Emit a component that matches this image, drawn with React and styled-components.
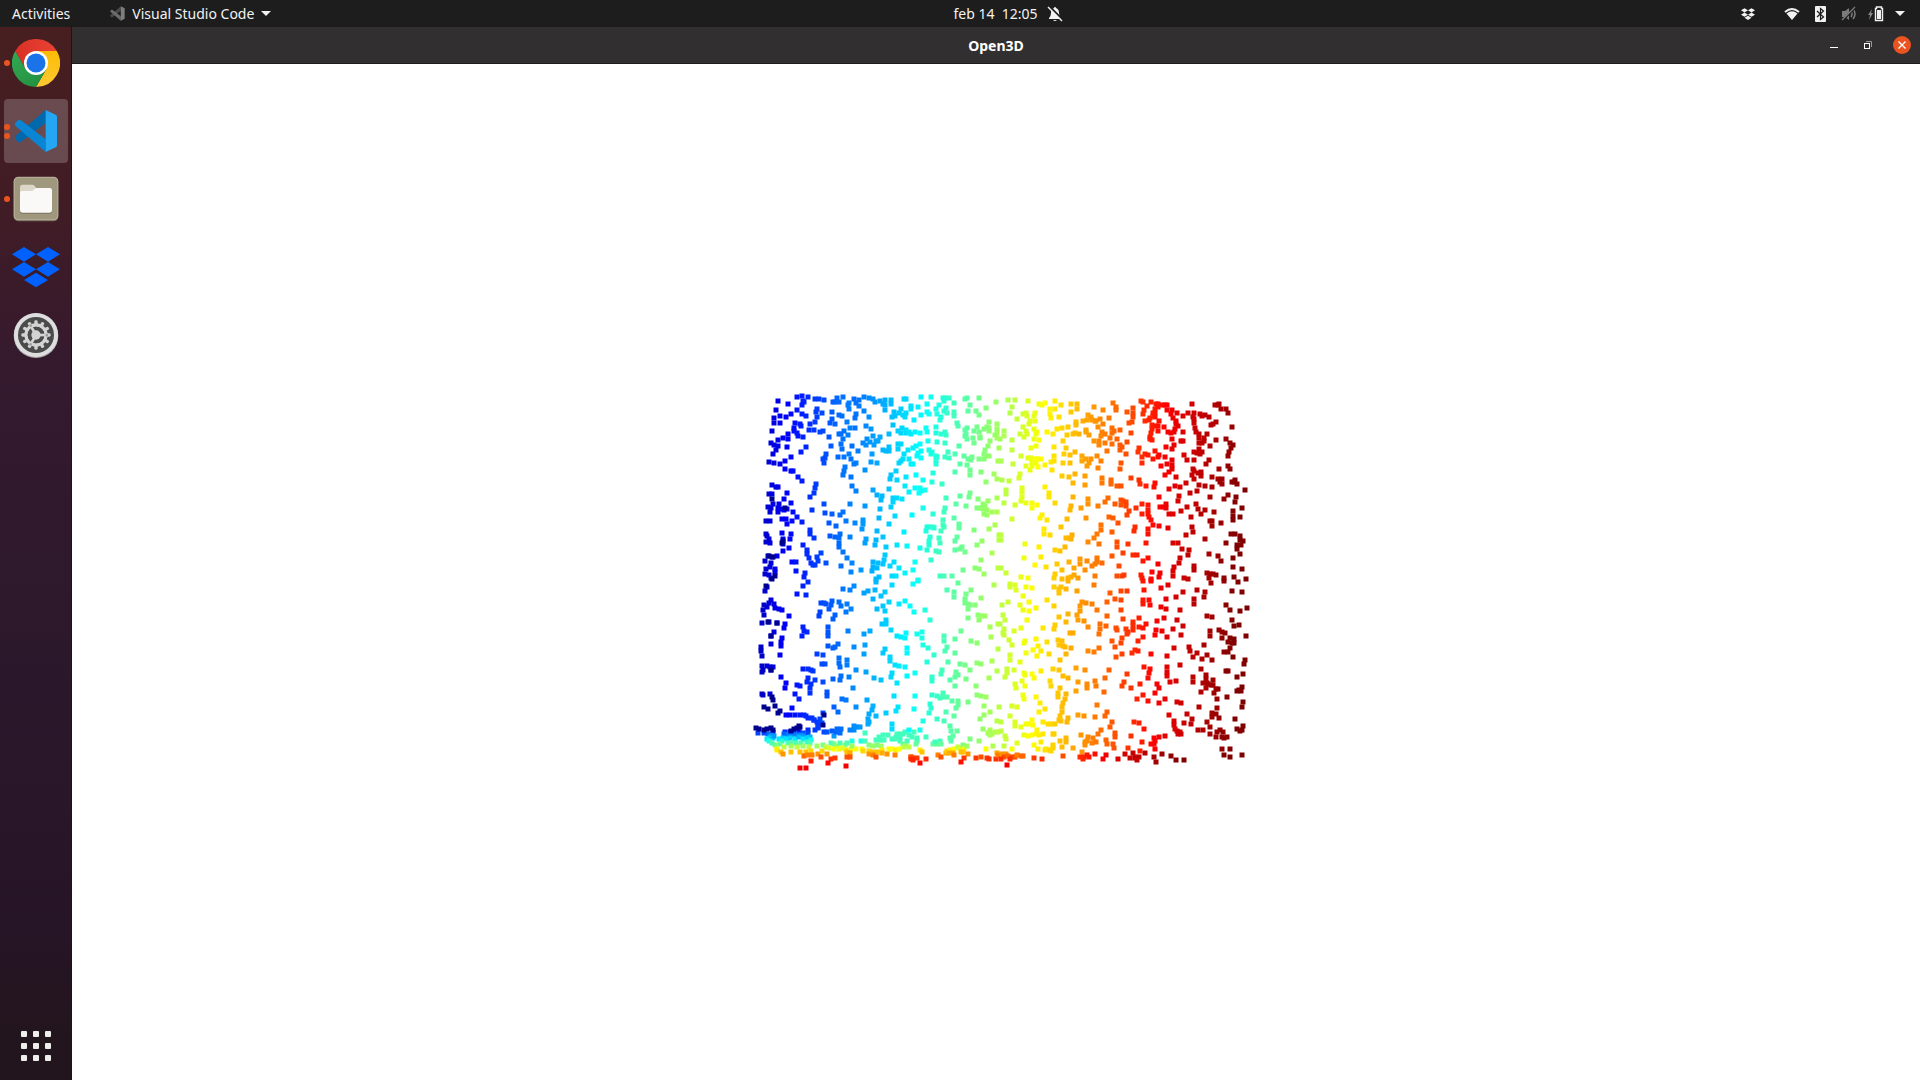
import React from "react";
import styled, { createGlobalStyle } from "styled-components";

const Global = createGlobalStyle`
  * { box-sizing: border-box; }
  html, body, #root { height: 100%; margin: 0; }
  body { font-family: "Noto Sans", "Open Sans", sans-serif; font-size: 14px; color: #f2f2f2; background: #fff; overflow: hidden; }
  button { font: inherit; color: inherit; background: none; border: 0; padding: 0; margin: 0; }
  svg { display: block; }
`;

const Desktop = styled.div`
  display: flex;
  flex-direction: column;
  height: 100vh;
`;

const TopBar = styled.header`
  display: grid;
  grid-template-columns: 72px 1fr auto 1fr;
  align-items: center;
  height: 27px;
  flex: none;
  background: #1d1d1d;
`;

const BarLeft = styled.div`
  grid-column: 1 / 3;
  display: flex;
  align-items: center;
  gap: 40px;
  padding-left: 12px;
`;

const BarButton = styled.button`
  display: flex;
  align-items: center;
  gap: ${(p) => p.$gap || 7}px;
  line-height: 26px;
  white-space: pre;
`;

const Clock = styled(BarButton)`
  padding-left: 24px;
`;

const Tray = styled.div`
  display: flex;
  align-items: center;
  justify-content: flex-end;
  gap: 11px;
  padding-right: 15px;
`;

const TrayItem = styled.span`
  padding-right: ${(p) => p.$space}px;
`;

const Body = styled.div`
  display: flex;
  flex: 1;
  min-height: 0;
`;

const Dock = styled.nav`
  display: flex;
  flex-direction: column;
  gap: 4px;
  width: 72px;
  flex: none;
  padding: 4px 3px 2px 4px;
  border-right: 1px solid #1f1119;
  background: linear-gradient(#481f20 0%, #401c26 18%, #351a2e 32%, #2d182c 55%, #261527 85%, #23151d 96%);
`;

const DockItem = styled.button`
  position: relative;
  display: flex;
  align-items: center;
  justify-content: center;
  width: 64px;
  height: 64px;
  border-radius: 4px;
  background: ${(p) => (p.$active ? "rgba(255,255,255,0.2)" : "none")};
  margin-top: ${(p) => (p.$last ? "auto" : "0")};
`;

const Running = styled.span`
  position: absolute;
  left: 0;
  top: 0;
  height: 100%;
  display: flex;
  flex-direction: column;
  justify-content: center;
  gap: 3px;
`;

const Dot = styled.i`
  width: 6px;
  height: 6px;
  border-radius: 50%;
  background: #e95420;
`;

const Win = styled.main`
  display: flex;
  flex-direction: column;
  flex: 1;
  min-width: 0;
  background: #fff;
`;

const TitleBar = styled.div`
  display: grid;
  grid-template-columns: 1fr auto 1fr;
  align-items: center;
  height: 37px;
  flex: none;
  background: #322f30;
  border-bottom: 1px solid #1f1c1d;
`;

const Title = styled.h1`
  grid-column: 2;
  margin: 0;
  padding-top: 2px;
  font-size: 14px;
  line-height: 34px;
  font-weight: 700;
  color: #fff;
`;

const Controls = styled.div`
  display: flex;
  justify-content: flex-end;
  gap: 10px;
  padding-right: 6px;
`;

const Control = styled.button`
  width: 24px;
  height: 24px;
`;

const Scene = styled.svg`
  flex: 1;
  width: 100%;
  min-height: 0;
`;

/* ---------- icons ---------- */

const Chrome = () => (
  <svg width="48" height="48" viewBox="0 0 48 48">
    <defs>
      <linearGradient id="cr" x1="0" x2="1"><stop offset="0" stopColor="#d93025" /><stop offset="1" stopColor="#ea4335" /></linearGradient>
      <linearGradient id="cg" x1="0" x2="1" y1="0" y2="1"><stop offset="0" stopColor="#34a853" /><stop offset="1" stopColor="#1e8e3e" /></linearGradient>
      <linearGradient id="cy" x1="0" x2="0" y1="0" y2="1"><stop offset="0" stopColor="#fbbc04" /><stop offset="1" stopColor="#fcc934" /></linearGradient>
    </defs>
    <path fill="url(#cr)" d="M3.2 12A24 24 0 0 1 44.8 12H24L13.6 30Z" />
    <path fill="url(#cy)" d="M44.8 12A24 24 0 0 1 24 48L34.4 30L24 12Z" />
    <path fill="url(#cg)" d="M24 48A24 24 0 0 1 3.2 12L13.6 30L24 36L34.4 30Z" />
    <circle cx="24" cy="24" r="12" fill="#fff" />
    <circle cx="24" cy="24" r="9.5" fill="#1a73e8" />
  </svg>
);

const VSCode = ({ size = 48, mono }) => (
  <svg width={size} height={size} viewBox={mono ? "6 6 132 132" : "0 0 144 144"}>
    <path fill={mono ? "#4a4a4a" : "#0069ae"} d="M101 9V47L27 104Q22 108 18 104L10 96Q6 92 10 88Z" />
    <path fill={mono ? "#6c6c6c" : "#0a85d3"} d="M101 135V97L27 40Q22 36 18 40L10 48Q6 52 10 56Z" />
    <path fill={mono ? "#7e7e7e" : "#24a6f2"} d="M101 9L131 23Q135 25 135 29V115Q135 119 131 121L101 135Z" />
  </svg>
);

const Files = () => (
  <svg width="48" height="48" viewBox="0 0 144 144">
    <rect x="5" y="8" width="134" height="131" rx="14" fill="#6f6958" />
    <rect x="5" y="5" width="134" height="131" rx="14" fill="#b8b19b" />
    <rect x="8" y="8" width="128" height="125" rx="12" fill="#a0977f" />
    <path fill="#dcd6c8" d="M24 36Q24 29 31 29H61Q65 29 68 33L74 41H112V60H24Z" />
    <path fill="#837b67" d="M24 52H120V109Q120 117 112 117H32Q24 117 24 109Z" />
    <path fill="#faf9f7" d="M24 53Q24 48 30 48H58Q64 48 67 43Q70 39 75 39H113Q120 39 120 46V106Q120 113 113 113H31Q24 113 24 106Z" />
  </svg>
);

const Dropbox = ({ size = 48, color = "#0061ff" }) => (
  <svg width={size} height={size} viewBox="0 0 144 144">
    {[[36, 34], [108, 34], [36, 79], [108, 79], [72, 111]].map(([x, y]) => (
      <path key={x + "-" + y} fill={color} d={`M${x - 36} ${y}L${x} ${y - 22}L${x + 36} ${y}L${x} ${y + 22}Z`} />
    ))}
  </svg>
);

const Settings = () => (
  <svg width="48" height="48" viewBox="0 0 144 144">
    <circle cx="72" cy="74" r="67" fill="#a8a8a8" />
    <circle cx="72" cy="72" r="66" fill="#dedede" />
    <circle cx="72" cy="72" r="54" fill="#4b4b4b" />
    {Array.from({ length: 12 }, (_, i) => (
      <rect key={i} x="67" y="28" width="10" height="16" rx="4" fill="#d3d3d3" transform={`rotate(${i * 30} 72 72)`} />
    ))}
    <circle cx="72" cy="72" r="30" fill="none" stroke="#d3d3d3" strokeWidth="10" />
    <circle cx="72" cy="72" r="20" fill="none" stroke="#4b4b4b" strokeWidth="10" />
    {[0, 120, 240].map((a) => (
      <g key={a} transform={`rotate(${a} 72 72)`}>
        <rect x="72" y="68" width="28" height="8" fill="#d3d3d3" />
        <circle cx="56" cy="44" r="4" fill="#9a9a9a" />
      </g>
    ))}
    <circle cx="72" cy="72" r="14" fill="#d3d3d3" />
  </svg>
);

const AppsGrid = () => (
  <svg width="30" height="30" viewBox="0 0 30 30">
    {[0, 12, 24].map((y) => [0, 12, 24].map((x) => (
      <rect key={x + "-" + y} x={x} y={y} width="6" height="6" rx="1" fill="#eeeeec" />
    )))}
  </svg>
);

const Caret = () => (
  <svg width="10" height="6" viewBox="0 0 10 6"><path d="M0 0H10L5 5Z" fill="#f2f2f2" /></svg>
);

const BellOff = () => (
  <svg width="16" height="16" viewBox="0 0 16 16">
    <path fill="#f2f2f2" d="M8 1Q9 1 9 2Q12 3 12 7Q12 10 14 12V13H2V12Q4 10 4 7Q4 3 7 2Q7 1 8 1ZM6 14H10Q9 15 8 15Q7 15 6 14Z" />
    <path d="M2 0L16 14" stroke="#1d1d1d" strokeWidth="2" />
    <path d="M1 1L15 15" stroke="#f2f2f2" strokeWidth="1.4" />
  </svg>
);

const Wifi = () => (
  <svg width="16" height="14" viewBox="0 0 16 14">
    <path d="M1 5Q8 -1 15 5" fill="none" stroke="#f2f2f2" strokeWidth="2" />
    <path d="M2.5 6.5Q8 2 13.500 6.500L8 13Z" fill="#f2f2f2" />
  </svg>
);

const Bluetooth = () => (
  <svg width="11" height="16" viewBox="0 0 11 16">
    <rect width="11" height="16" rx="1" fill="#f2f2f2" />
    <path d="M2 5L8.500 11L5.500 13.500V2.500L8.500 5L2 11" fill="none" stroke="#1d1d1d" strokeWidth="1.200" />
  </svg>
);

const Muted = () => (
  <svg width="16" height="16" viewBox="0 0 16 16">
    <path d="M1 5H4L8 2V14L4 11H1Z" fill="#7c7c7c" />
    <path d="M10 5Q12 8 10 11M12 3Q16 8 12 13" fill="none" stroke="#7c7c7c" strokeWidth="1.500" />
    <path d="M15 1L2 14" stroke="#1d1d1d" strokeWidth="2" />
    <path d="M14 1L1 14" stroke="#7c7c7c" strokeWidth="1.300" />
  </svg>
);

const Battery = () => (
  <svg width="16" height="16" viewBox="0 0 16 16">
    <path d="M4 3L0 9H2L1 14L5 7H3Z" fill="#888" />
    <path d="M8.500 2.500V1H13.500V2.500H14.500V14.500H7.500V2.500Z" fill="none" stroke="#f2f2f2" strokeWidth="1.400" />
    <rect x="9" y="4" width="4" height="9" fill="#f2f2f2" />
  </svg>
);

/* ---------- point cloud ---------- */

/* Scan tiles: origin in screen space, samples as x,y pairs in thirds of a pixel. */
const TILES = [
  { x: 740, y: 380, pts: `113,64 145,71 172,52 185,47 205,50 188,62 193,66 186,76 225,57 238,57 252,61 278,65 291,53 310,52 284,65 298,67 326,68 325,74 343,58 371,52 357,60 347,70 357,78 387,54 398,56 406,67 421,64 436,61 430,72 436,75 452,72 453,60 436,90 491,56 499,58 543,50 573,50 560,72 535,82 596,74 611,64 616,54 628,53 610,53 642,68 676,58 682,53 718,54 768,65 691,76 739,84
107,89 102,115 103,128 120,130 121,107 138,111 152,101 172,90 185,103 199,108 232,86 229,96 246,98 232,112 225,125 209,133 165,130 180,131 184,137 162,145 162,152 175,167 171,160 207,149 221,151 239,155 250,154 190,172 276,97 277,117 271,130 286,133 296,106 305,108 326,86 322,125 347,102 345,115 372,92 388,112 330,145 345,143 311,154 323,166 377,138 393,146 460,134 463,97 457,110 483,87 478,100 490,104 497,100 496,112 466,109 512,78 513,86 522,121 544,106 561,97 568,101 589,88 591,102 619,84 613,92 641,96 641,109 620,98 604,112 600,121 651,128 653,138 685,92 707,92 718,106 748,127 771,131 711,140 741,140 747,144 746,154 732,147 716,155 771,146
96,154 92,188 113,180 130,175 144,176 145,162 103,195 115,198 109,210 99,221 140,202 199,201 184,215 88,247 101,249 119,252 135,242 152,231 134,268 152,274 160,274 174,290 187,303 266,172 274,199 257,221 254,235 252,248 249,237 297,162 304,161 308,176 302,193 307,206 294,231 312,231 326,221 333,236 343,251 349,250 355,214 337,197 370,188 382,178 379,194 390,187 400,169 407,182 414,184 402,196 419,171 397,222 392,245 410,249 376,270 315,260 311,273 310,286 334,290 447,163 475,154 487,145 483,160 499,150 498,160 508,157 513,162 524,157 541,160 559,144 560,157 589,142 614,157 589,160 604,162 619,164 615,190 592,185 563,183 540,192 474,192 484,193 473,208 447,202 446,214 430,211 439,212 505,210 520,203 527,197 493,223 542,212 533,219 530,228 542,233 508,238 489,237 483,242 477,249 512,251 520,251 568,210 576,216 573,223 588,227 587,240 587,252 592,232 616,230 625,217 628,234 646,221 657,199 676,151 681,144 679,161 674,167 680,176 702,154 698,175 703,189 719,174 719,170 751,184 743,197 736,209 771,159 771,173 766,165 777,204 673,228 683,237 696,230 694,241 718,238 733,222 732,237 738,228 748,228 775,243 660,251 680,254 689,269 691,284 646,276 724,275 763,283 771,297 737,306
95,316 107,320 115,320 86,341 96,341 140,338 229,313 225,325 223,338 209,350 337,319 349,334 398,329 446,328 454,286 469,274 451,297 471,300 499,291 529,284 495,318 508,335 526,324 541,325 556,329 543,333 538,340 549,300 579,278 577,305 607,311 411,345 426,348 424,361 460,354 470,354 485,358 458,367 454,380 421,388 376,379 329,371 252,371 84,381 94,383 99,372 117,371 114,385 127,387 115,397 90,396 132,358 153,368 141,386 131,391 217,391 160,396 170,411 157,423 127,418 138,418 140,433 79,422 89,422 185,427 255,399 276,403 299,406 310,395 268,428 289,438 318,424 344,428 370,420 368,433 366,446 418,414 447,433 466,409 515,404 550,383 579,402 618,355 615,383 612,396 648,373 660,348 689,339 686,352 713,356 679,379 710,384 722,384 728,373 734,377 745,362 771,354 728,387 740,390 740,404 755,397 771,395 733,401 608,421 608,435 643,414 657,431 658,444 611,442 560,440 568,442 582,444 557,454 578,442 569,470 603,454 701,451 748,447 766,435
79,462 82,468 86,476 78,487 91,489 125,458 152,462 149,476 147,503 130,514 129,478 129,491 210,449 210,461 222,474 190,496 202,511 201,523 208,535 212,550 220,554 226,556 234,544 231,530 243,518 259,550 269,469 284,472 301,462 297,475 298,488 298,501 310,517 322,534 303,557 337,550 331,472 376,488 379,476 410,454 407,481 406,495 430,471 438,501 470,494 491,456 502,499 539,505 566,483 568,496 561,510 598,475 600,489 588,514 596,515 651,471 644,484 660,506 665,500 646,511 676,517 711,496 726,484 776,466 776,480 757,518 722,539 573,539 526,545 462,547 434,526 432,540 430,553 451,558 477,563 495,580 520,571 415,550 400,547 399,562 396,574 412,563 364,569 333,576 85,528 97,532 110,529 75,542 94,548 91,560 79,567 106,576 74,582 88,585 93,593 104,566 155,545 169,547 167,574 194,578 193,591 416,592 407,598 457,587 467,588 535,600 601,587 613,588 635,587 670,571 704,563 718,567 733,583 775,565` },
  { x: 1000, y: 380, pts: `24,61 46,60 84,64 37,82 30,100 52,118 13,154 13,167 1,177 36,180 37,209 2,243 40,253 70,102 78,100 82,109 102,107 105,98 117,73 125,74 134,69 164,64 182,74 150,87 150,102 152,115 165,88 178,110 213,73 231,71 232,88 214,97 281,81 310,90 339,68 347,82 348,91 68,142 89,124 105,124 88,132 78,154 61,163 80,163 71,172 111,155 101,147 107,162 102,178 117,181 109,197 93,204 64,227 84,233 92,233 107,236 124,237 111,237 115,262 95,245 95,258 90,270 78,257 109,250 154,245 134,255 142,155 159,162 172,146 185,143 205,142 200,166 218,162 226,160 238,162 229,125 229,134 248,122 262,121 263,106 272,112 284,122 289,124 301,117 310,131 328,115 295,141 257,150 257,156 266,164 305,157 315,161 302,169 298,182 283,184 296,195 315,189 335,192 337,145 337,158 343,154 350,176 331,175 359,149 361,196 360,209 366,202 322,214 188,182 197,205 163,202 193,223 211,226 226,216 163,229 163,242 189,250 211,248 246,229 247,243 257,236 272,238 267,250 262,259 292,227 304,242 295,265 157,270 186,289 206,292 224,282 220,309 256,287 254,314 307,295 307,309 334,299 334,313 352,317 363,319 360,266 364,248 378,223 382,185 392,160 392,295 61,282 56,293 28,304 5,300 19,331 18,343 11,370 44,376 67,324 67,337 67,350 64,363 77,368 95,370 95,384 110,374 135,322 148,338 147,351 164,369 219,350 213,377 211,390 242,383 263,357 263,371 293,377 316,367 324,354 345,372 363,360 363,374 370,362 377,365 378,378 388,394 382,406 409,384 37,417 127,404 121,415 142,421 133,447 133,461 150,465 184,442 201,418 257,414 326,411 340,414 353,430 304,436 302,449 291,461 282,474 264,485 297,492 335,455 216,464 214,476 207,473 199,474 195,502 164,509 179,513 118,501 124,532 75,493 73,535 104,554 139,561 172,553 187,570 165,582 163,595 207,546 223,563 239,538 240,551 262,542 292,533 291,546 284,552 277,559 254,569 306,550 285,588 335,527 351,487 350,500 369,519 383,492 357,559 352,587 366,589 373,584 222,584 214,591 234,593 185,598 203,595 64,590 84,593 18,580 4,564 2,466 2,479 277,121
382,96 400,85 400,98 398,112 395,126 386,130 422,63 430,65 440,77 453,66 433,90 429,103 467,71 474,72 486,74 494,76 502,76 464,86 473,81 460,98 458,109 465,100 466,112 449,115 436,124 448,121 478,122 457,134 467,139 473,137 456,146 453,160 449,172 449,178 457,180 473,154 492,142 516,89 514,102 518,115 502,90 530,98 529,122 528,133 535,139 525,148 522,155 505,157 512,159 517,176 549,108 564,100 575,72 582,98 580,111 581,118 582,130 585,144 588,157 597,163 599,102 607,107 614,105 628,111 649,125 640,131 632,136 646,76 658,73 653,76 662,88 679,88 685,100 697,140 620,162 550,155 550,182 543,182 597,173 611,175 613,184 596,188 605,190 648,180 629,198 679,176 691,189 700,194 694,204 686,217 685,229 607,217 590,218 597,208 582,217 599,222 551,226 560,239 581,241 627,239 619,253 523,195 516,208 497,201 466,214 417,205 413,215 426,232 435,223 445,224 426,248 473,231 460,237 478,226 494,232 484,259 516,241 515,254 502,252 516,268 508,277 495,285 529,290 578,266 583,274 593,280 603,275 577,285 581,298 603,287 635,292 657,268 683,258 691,268 653,296 666,298 660,305 667,311 696,305 703,307 711,311 706,299 736,330 637,321 615,319 597,314 592,332 571,340 557,309 541,320 526,317 508,328 536,349 534,362 477,352 417,300 421,313 437,318 466,308 461,321 631,350 685,346 673,357 708,352 704,366 726,384 721,411 700,394 700,407 700,421 588,371 595,387 604,403 615,390 642,395 573,412 562,380 544,393 518,402 508,401 499,371 499,384 481,381 491,382 427,373 445,376 445,389 445,402 426,401 448,412 453,421 460,434 477,438 504,443 443,447 443,461 405,440 401,453 439,488 629,423 637,424 636,437 664,428 577,442 578,455 559,466 615,477 694,462 706,463 720,467 719,480 730,482 710,494 722,495 710,507 721,523 679,488 519,489 534,490 546,507 566,511 563,524 541,535 538,548 628,521 655,527 664,542 699,534 583,557 582,571 522,560 520,574 520,588 475,551 445,535 428,543 398,524 412,526 424,585 457,577 479,580 477,592 427,595 452,597 620,578 630,582 640,582 649,584 628,595 671,594 700,562 726,566 702,592 738,597 552,594 564,597` },
  { x: 740, y: 580, pts: `82,20 75,33 205,7 190,18 172,43 199,46 94,60 86,68 71,75 69,89 80,82 102,73 104,85 117,88 127,90 73,106 146,107 66,130 88,127 112,128 134,133 132,145 102,155 94,167 126,173 122,186 123,198 92,193 120,226 64,200 64,213 66,228 67,257 82,258 91,261 98,262 68,270 66,277 93,271 188,142 201,157 187,169 191,153 242,68 251,70 259,72 275,62 272,74 266,87 239,95 237,108 285,104 280,117 296,65 303,79 320,71 333,86 317,97 310,26 329,31 343,19 372,39 385,33 407,5 404,31 400,58 424,49 436,37 455,14 519,11 535,2 447,67 430,77 436,92 412,88 478,73 495,63 509,79 523,95 556,89 437,120 425,131 437,132 452,151 569,119 547,156 532,162 547,174 264,142 264,156 264,169 325,153 390,152 372,163 264,199 278,203 286,202 294,191 342,201 374,194 372,222 436,207 430,220 450,231 450,244 471,169 484,172 494,173 499,160 501,205 501,218 549,196 565,205 581,224 561,247 613,169 613,182 622,202 614,212 645,177 664,152 646,220 623,245 659,252 675,256 710,248 724,251 757,244 775,207 711,190 694,182 754,171 775,131 750,140 726,109 715,106 716,119 734,109 683,114 653,10 621,31 642,37 642,50 694,31 677,43 674,56 675,69 685,73 691,74 685,86 705,75 723,54 761,16 770,274 746,295 709,317 689,271 679,296 649,277 653,285 646,290 630,300 646,318 607,269 603,282 577,290 576,303 230,221 250,226 247,251 256,253 190,266 205,268 212,270 220,272 297,235 297,249 322,241 320,254 300,262 347,271 377,277 326,292 304,289 299,301 278,298 249,305 401,295 424,299 457,280 452,292 471,310 502,289 525,280 464,256 478,259 494,261 203,295 201,307 226,299 212,312 211,325 211,338 123,292 137,310 134,323 172,316 181,318 166,343 176,358 65,343 69,346 90,341 157,384 262,336 260,348 339,323 463,349 526,349 305,358 318,361 283,382 294,397 348,381 381,360 398,378 395,391 387,401 407,407 385,418 384,431 439,400 474,380 469,393 522,388 549,424 571,372 573,385 568,398 576,346 591,348 599,355 609,338 608,350 621,352 637,364 655,362 655,374 648,384 617,395 642,408 612,424 631,437 590,418 712,346 724,347 739,350 685,367 732,377 777,381 749,395 731,405 720,417 771,423 729,448 749,450 652,454 633,453
139,405 151,405 166,406 179,406 191,404 197,408 205,415 215,413 221,421 230,425 249,400 240,417 233,429 247,428 233,440 226,450 222,420 98,456 53,459 71,460 136,456 149,457 161,459 176,453 188,460 203,451 131,463 144,465 156,466 170,465 182,466 192,468 205,460 210,470 233,445 251,455 261,457 276,454 281,467 289,457 292,448 302,447 301,460 331,451 341,439 343,450 352,440 361,441 386,426 374,460 456,433 456,446 85,463 94,465 90,472 99,474 101,467 80,477 88,482 118,478 128,475 127,484 140,476 151,474 165,478 178,472 190,478 200,473 212,480 200,487 183,488 168,490 153,488 144,490 120,492 104,494 96,490 211,489 110,508 133,500 154,498 172,500 190,498 206,500 230,499 250,494 257,500 272,490 283,492 290,497 301,488 315,495 322,490 337,484 363,484 375,482 408,481 416,472 421,479 430,466 445,466 433,479 455,476 467,470 472,461 482,461 479,470 490,463 494,457 508,451 508,464 523,455 540,451 516,471 531,474 557,470 530,483 480,484 490,491 500,482 498,494 508,502 465,478 268,504 283,508 296,508 307,505 319,510 334,507 347,507 336,497 365,507 368,514 388,495 399,497 411,495 424,499 425,509 447,507 456,508 468,509 478,507 493,500 529,493 540,510 547,515 578,491 591,491 601,482 602,493 586,485 629,475 640,469 634,482 112,509 124,515 130,523 154,515 180,515 197,516 212,513 215,525 192,527 203,525 233,523 243,532 246,512 261,523 273,537 284,535 321,517 330,520 320,530 329,531 388,514 387,523 400,517 411,516 400,525 407,532 426,520 441,521 466,524 514,532 520,534 532,533 558,537 512,530 512,538 519,541 539,549 595,524 603,532 618,520 620,512 631,509 642,508 628,518 640,519 653,500 660,505 668,495 673,508 668,517 681,497 683,522 643,525 662,515 691,478 716,484 738,508 760,497 770,519 745,458 755,461 765,457 750,466 775,457 673,535 662,547 708,535 722,532 742,533 748,536 768,538 775,525 212,544 264,549 317,558 181,563 199,565` },
  { x: 1000, y: 580, pts: `29,11 31,20 46,16 48,30 69,47 78,20 96,24 24,67 5,76 61,74 70,89 88,65 88,92 109,83 82,119 9,104 15,120 1,131 13,148 9,160 12,166 41,154 63,145 26,180 35,196 76,184 73,188 109,176 115,198 100,210 124,214 112,228 79,220 29,224 31,239 61,245 21,266 21,279 16,292 41,270 73,278 74,284 46,311 49,325 65,302 76,318 70,344 71,358 96,281 101,295 122,272 107,352 35,379 52,382 121,370 136,386 118,397 31,407 142,61 162,78 163,22 176,38 178,28 182,20 197,28 205,4 230,34 281,16 176,110 197,127 205,101 230,106 235,121 251,124 240,79 246,66 240,92 259,69 277,72 291,90 265,141 164,136 161,148 129,143 142,187 146,221 175,180 185,182 178,195 190,198 196,202 212,203 197,222 179,241 159,266 178,269 190,287 203,295 229,265 256,270 235,307 261,313 261,325 228,333 284,303 288,317 311,337 316,295 328,270 290,375 211,158 220,160 299,133 299,147 297,161 317,137 320,108 322,67 330,40 346,57 362,32 364,61 382,34 364,89 369,118 349,144 350,151 378,148 383,156 382,163 400,125 400,138 400,151 418,113 417,142 430,144 438,131 365,175 364,188 335,183 345,200 349,231 365,223 263,213 281,216 296,203 149,304 154,319 180,324 174,338 174,351 199,343 194,356 190,369 187,382 185,395 180,408 177,421 182,424 164,433 154,431 203,414 201,427 130,427 145,431 234,406 251,409 285,412 320,395 315,408 371,306 365,319 380,281 393,324 335,427 331,442 344,458 344,471 303,449 294,461 46,425 46,438 64,442 79,433 86,431 97,421 98,434 2,427 2,453 16,467 19,478 72,466 84,468 97,464 109,462 116,466 128,461 111,451 159,461 162,463 51,489 11,497 37,507 101,495 122,485 115,507 139,508 159,494 160,505 179,484 197,474 199,487 187,502 219,503 242,466 263,472 262,484 254,487 254,495 279,474 275,489 288,486 319,479 320,493 338,491 341,505 136,511 149,509 154,514 5,523 17,523 13,530 24,527 37,530 46,530 52,526 62,527 70,529 4,537 30,537 101,533 125,538 22,556 188,528 246,515 241,532 251,532 249,537 260,525 267,530 285,523 317,525 308,537 353,538
433,29 429,2 453,2 484,25 503,14 498,56 528,52 549,37 591,31 633,10 614,37 613,50 583,58 581,72 541,90 483,82 497,86 430,59 428,73 446,61 451,76 671,2 714,6 697,33 725,37 677,74 689,90 721,93 741,84 696,119 703,139 718,136 739,169 621,109 636,112 631,154 629,168 656,151 667,157 674,159 665,173 691,175 703,177 702,188 683,187 695,190 690,203 672,217 683,217 699,232 736,241 733,253 730,282 711,291 493,113 472,122 531,120 550,138 519,147 469,151 485,154 466,166 501,171 543,165 523,205 428,171 415,184 405,211 415,212 396,218 452,222 500,227 568,201 570,214 590,219 579,232 607,237 622,226 635,241 612,195 541,254 603,266 501,262 500,275 500,288 510,305 527,304 431,262 449,266 447,279 444,293 420,311 472,311 476,325 465,338 430,345 411,356 444,363 478,369 496,358 530,365 544,369 580,291 580,305 618,284 618,297 609,309 620,309 625,312 639,300 632,314 619,323 640,315 647,327 655,328 643,340 602,336 652,356 682,352 677,274 684,274 725,322 724,334 710,332 717,331 728,367 727,380 706,418 597,382 562,401 577,418 573,432 553,428 508,405 650,385 636,399 648,403 635,411 657,414 620,426 629,442 523,422 522,435 524,448 531,453 541,455 535,463 543,462 402,426 417,430 433,447 393,467 593,449 610,451 629,461 652,457 661,450 670,456 648,472 666,472 671,473 680,470 728,438 727,450 712,447 720,452 425,487 461,475 465,484 454,491 463,492 476,472 494,467 465,507 385,505 421,512 436,518 400,520 375,523 391,535 404,535 416,532 411,541 406,530 486,521 468,546 462,530 514,528 529,540 552,540 666,508 691,508 673,526 690,532 726,525` },
];

/* Samples of the far left edge, at the lowest end of the ramp. */
const FAR_EDGE = [
  [772, 499], [785, 508], [783, 541], [769, 556], [782, 543], [773, 557], [775, 576], [768, 622], [777, 623],
  [771, 636], [771, 670], [764, 707], [768, 709], [775, 706], [778, 713], [780, 711], [772, 697], [773, 700],
  [756, 728], [759, 729], [764, 730], [767, 729], [771, 728], [773, 730], [791, 731], [794, 729], [797, 728],
  [800, 727], [824, 715], [823, 725], [799, 726], [772, 579], [766, 586],
];

const BAND = [[729, 0.08], [735, 0.25], [740, 0.38], [745, 0.5], [749, 0.62], [754, 0.73], [758, 0.82], [764, 0.88], [772, 0.9]];

const bandDepth = (y) => {
  if (y <= BAND[0][0]) return 0;
  for (let i = 1; i < BAND.length; i++) {
    const [y1, t1] = BAND[i];
    const [y0, t0] = BAND[i - 1];
    if (y <= y1) return t0 + ((t1 - t0) * (y - y0)) / (y1 - y0);
  }
  return 0.9;
};

const depthAt = (x, y) => {
  const tilt = x > 850 ? 0.03 * Math.max(0, (550 - y) / 150) : 0;
  let across = 0.125 + (x - 788) / 487 - tilt;
  if (y > 730 && x > 862) across = Math.max(across, 0.44);
  if (y > 752 && x > 1000) across += 0.11;
  const t = Math.max(bandDepth(y), across);
  return t > 0.9 ? 0.9 + (t - 0.9) * 0.7 : t;
};

const jet = (t) => {
  const c = (k) => Math.round(255 * Math.min(1, Math.max(0, 1.5 - Math.abs(4 * Math.min(1, t) - k))));
  return `rgb(${c(3)},${c(2)},${c(1)})`;
};

const POINTS = TILES.flatMap((tile) =>
  tile.pts.trim().split(/\s+/).map((pair) => {
    const [u, v] = pair.split(",").map(Number);
    const x = Math.round(tile.x + u / 3);
    const y = Math.round(tile.y + v / 3);
    return { x, y, color: jet(depthAt(x, y)) };
  })
).concat(FAR_EDGE.map(([x, y]) => ({ x, y, color: jet(0.015) })));

const PointCloud = () => (
  <Scene viewBox="72 64 1848 1016" role="img" aria-label="Point cloud">
    {POINTS.map((p, i) => (
      <rect key={i} x={p.x - 2.5} y={p.y - 2.5} width="5" height="5" fill={p.color} />
    ))}
  </Scene>
);

const APPS = [
  { name: "Google Chrome", icon: <Chrome />, windows: 1 },
  { name: "Visual Studio Code", icon: <VSCode />, windows: 2, active: true },
  { name: "Files", icon: <Files />, windows: 1 },
  { name: "Dropbox", icon: <Dropbox />, windows: 0 },
  { name: "Settings", icon: <Settings />, windows: 0 },
];

export default function App() {
  return (
    <Desktop>
      <Global />
      <TopBar>
        <BarLeft>
          <BarButton>Activities</BarButton>
          <BarButton><VSCode size={15} mono />Visual Studio Code<Caret /></BarButton>
        </BarLeft>
        <Clock $gap={9}>{"feb 14  12:05"}<BellOff /></Clock>
        <Tray>
          <TrayItem $space={18}><Dropbox size={14} color="#f2f2f2" /></TrayItem>
          <TrayItem $space={4}><Wifi /></TrayItem>
          <TrayItem $space={4}><Bluetooth /></TrayItem>
          <Muted />
          <Battery />
          <Caret />
        </Tray>
      </TopBar>
      <Body>
        <Dock>
          {APPS.map((app) => (
            <DockItem key={app.name} $active={app.active} aria-label={app.name}>
              {app.windows > 0 && (
                <Running>{Array.from({ length: app.windows }, (_, i) => <Dot key={i} />)}</Running>
              )}
              {app.icon}
            </DockItem>
          ))}
          <DockItem $last aria-label="Show Applications"><AppsGrid /></DockItem>
        </Dock>
        <Win>
          <TitleBar>
            <Title>Open3D</Title>
            <Controls>
              <Control aria-label="Minimize">
                <svg width="24" height="24" viewBox="0 0 24 24"><rect x="8" y="14" width="8" height="1" fill="#fff" /></svg>
              </Control>
              <Control aria-label="Restore">
                <svg width="24" height="24" viewBox="0 0 24 24">
                  <path d="M10 8.500H15.500V14" fill="none" stroke="#999" />
                  <rect x="8.500" y="10.500" width="5" height="5" fill="none" stroke="#fff" />
                </svg>
              </Control>
              <Control aria-label="Close">
                <svg width="24" height="24" viewBox="0 0 24 24">
                  <circle cx="12" cy="12" r="9" fill="#e95420" />
                  <path d="M8.500 8.500L15.500 15.500M15.500 8.500L8.500 15.500" stroke="#fff" strokeWidth="1.400" />
                </svg>
              </Control>
            </Controls>
          </TitleBar>
          <PointCloud />
        </Win>
      </Body>
    </Desktop>
  );
}
